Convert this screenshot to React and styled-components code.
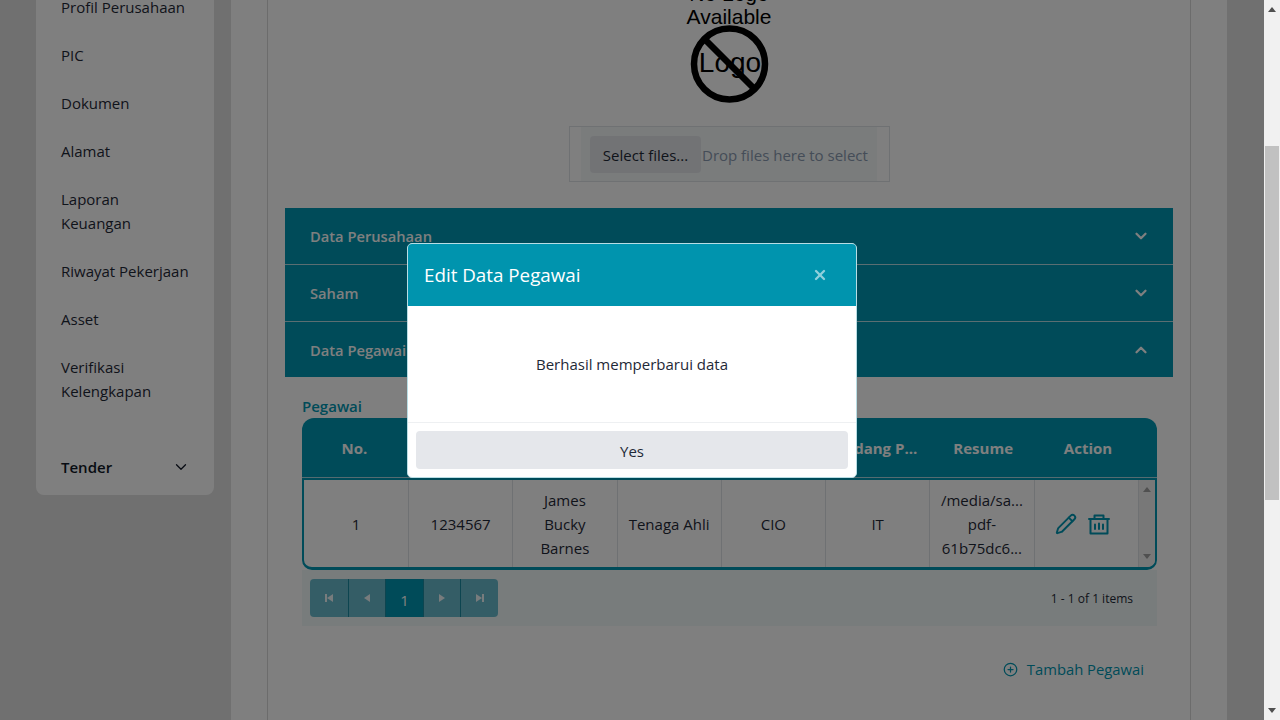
import React from 'react';
import styled, { createGlobalStyle } from 'styled-components';
import { ChevronDown, ChevronUp, X, Pencil, CirclePlus } from 'lucide-react';

const GlobalStyle = createGlobalStyle`
    html, body {
        margin: 0;
        height: 100%;
        overflow: hidden;
        background: #e0e0e0;
        font-family: "Open Sans", "Noto Sans", sans-serif;
        font-size: 15px;
        line-height: 24px;
        color: #212529;
    }
`

const Screen = styled.div`
    display: flex;
    width: 1280px;
    height: 720px;
    overflow: hidden;
    position: relative;
`
const PageArea = styled.div`
    width: 1264px;
    height: 720px;
    display: flex;
    align-items: flex-start;
    padding: 0 37px 0 36px;
    box-sizing: border-box;
    overflow: hidden;
`
const Sidebar = styled.nav`
    width: 178px;
    margin-top: -17px;
    background: #fff;
    border-radius: 0 0 8px 8px;
    padding-bottom: 16px;
    flex-shrink: 0;
`
const NavItem = styled.div`
    padding: 12px 25px;
    color: #1f2937;
`
const NavGroup = styled.div`
    margin-top: 40px;
    padding: 0 24px 0 25px;
    display: flex;
    justify-content: space-between;
    align-items: center;
    height: 24px;
    font-weight: 600;
    color: #111827;
`
const MainPanel = styled.main`
    width: 996px;
    height: 720px;
    margin-left: 17px;
    background: #fff;
    padding: 0 36px;
    box-sizing: border-box;
    flex-shrink: 0;
`
const Inner = styled.div`
    height: 720px;
    border-left: 1px solid #d8d8d8;
    border-right: 1px solid #d8d8d8;
    padding: 0 17px;
`
const LogoBlock = styled.div`
    height: 126px;
    display: flex;
    justify-content: center;
`
const NoLogo = styled.svg`
    width: 120px;
    height: 126px;
    overflow: visible;
    flex-shrink: 0;
`
const UploadBox = styled.div`
    width: 321px;
    height: 56px;
    margin-left: 284px;
    border: 1px solid #dee2e6;
    padding: 0 12px 0 11px;
    box-sizing: border-box;
    display: flex;
    background: #fff;
`
const UploadInner = styled.div`
    flex: 1;
    background: #f4f8f8;
    padding: 9px 8px 0 9px;
    display: flex;
    align-items: flex-start;
`
const SelectButton = styled.div`
    width: 111px;
    height: 37px;
    line-height: 38px;
    text-align: center;
    background: #e5e7eb;
    border-radius: 4px;
    color: #1f2937;
    flex-shrink: 0;
`
const DropText = styled.div`
    line-height: 38px;
    margin-left: 1px;
    color: #8a9ab0;
    white-space: nowrap;
`
const Accordion = styled.div`
    margin-top: 26px;
    background: #b4dce4;
    display: flex;
    flex-direction: column;
    gap: 1px;
`
const AccordionRow = styled.div`
    height: ${props => props.$height}px;
    background: #0097b2;
    padding: 0 23px 0 25px;
    display: flex;
    justify-content: space-between;
    align-items: center;
    color: #fff;
    font-size: 14.7px;
    font-weight: 600;
`
const TableArea = styled.div`
    padding: 17px 16px 0 17px;
`
const TableTitle = styled.div`
    color: #0097b2;
    font-weight: 600;
    line-height: 24px;
`
const TableHead = styled.div`
    display: grid;
    grid-template-columns: repeat(8, 104.8px) 1fr;
    height: 59px;
    background: #0097b2;
    border-bottom: 1px solid #a8d8e2;
    border-radius: 12px 12px 0 0;
    align-items: center;
    color: #fff;
    font-weight: 700;
    text-align: center;
`
const HeadCell = styled.div`
    padding: 0 8px;
    white-space: nowrap;
`
const TableBody = styled.div`
    display: grid;
    grid-template-columns: 105px repeat(7, 104.25px) 1fr;
    height: 92px;
    box-sizing: border-box;
    border: 2px solid #0097b2;
    border-bottom-width: 3px;
    border-radius: 0 0 10px 10px;
    overflow: hidden;
`
const Cell = styled.div`
    display: flex;
    align-items: center;
    justify-content: center;
    text-align: center;
    padding: 0 4px;
    border-right: 1px solid #dee2e6;
    color: #1f2937;
`
const ActionCell = styled(Cell)`
    gap: 11px;
    padding: 1px 8px 0 0;
`
const IconButton = styled.span`
    display: inline-flex;
    color: #0097b2;
`
const InnerScroll = styled.div`
    background: #f1f1f1;
    display: flex;
    flex-direction: column;
    justify-content: space-between;
    align-items: center;
    padding: 5px 0 6px;
`
const Pager = styled.div`
    height: 56px;
    background: #f0f8f8;
    display: flex;
    justify-content: space-between;
    align-items: center;
    padding: 0 24px 0 8px;
`
const PagerButtons = styled.div`
    display: flex;
    height: 38px;
    border-radius: 4px;
    overflow: hidden;
`
const PageBtn = styled.div`
    width: 37.6px;
    display: flex;
    align-items: center;
    justify-content: center;
    background: ${props => props.$active ? '#0097b2' : '#68bacc'};
    border-left: ${props => props.$first ? 0 : '1px solid #1a8aa0'};
    box-sizing: border-box;
    color: #fff;
    padding-top: ${props => props.$active ? '3px' : 0};
`
const PageInfo = styled.div`
    font-size: 12px;
    padding-top: 2px;
    color: #1f2937;
`
const AddLink = styled.div`
    display: flex;
    justify-content: flex-end;
    align-items: center;
    gap: 9px;
    margin-top: 31px;
    padding-right: 13px;
    font-size: 14.8px;
    color: #0097b2;
`
const Glyph = styled.svg`
    width: 10px;
    height: 10px;
    fill: ${props => props.$color || '#fff'};
`
const TrashIcon = styled.svg`
    width: 22px;
    height: 22px;
    fill: none;
    stroke: currentColor;
    stroke-width: 2;
    stroke-linejoin: round;
    stroke-linecap: round;
`
const Overlay = styled.div`
    position: absolute;
    top: 0;
    left: 0;
    width: 1264px;
    height: 720px;
    background: rgba(0, 0, 0, 0.5);
    display: flex;
    align-items: center;
    justify-content: center;
`
const Modal = styled.div`
    width: 450px;
    height: 235px;
    box-sizing: border-box;
    background: #fff;
    border: 1px solid #b8dde4;
    border-radius: 5px;
    overflow: hidden;
    display: flex;
    flex-direction: column;
`
const ModalHeader = styled.div`
    height: 62px;
    background: #0094ae;
    display: flex;
    justify-content: space-between;
    align-items: center;
    padding: 0 28px 0 16px;
    color: #fff;
    font-size: 18.8px;
`
const CloseIcon = styled.span`
    display: inline-flex;
    color: #8fd0dc;
`
const ModalBody = styled.div`
    height: 116px;
    display: flex;
    align-items: center;
    justify-content: center;
    color: #1f2937;
`
const ModalFooter = styled.div`
    flex: 1;
    border-top: 1px solid #eef0f2;
    padding: 8px;
`
const YesButton = styled.div`
    height: 38px;
    line-height: 40px;
    text-align: center;
    background: #e5e7eb;
    border-radius: 4px;
    color: #1f2937;
`
const ScrollBar = styled.div`
    width: 16px;
    height: 720px;
    background: #f1f1f1;
    display: flex;
    flex-direction: column;
    align-items: center;
    justify-content: space-between;
    padding: 5px 0;
    box-sizing: border-box;
    position: relative;
    flex-shrink: 0;
`
const ScrollThumb = styled.div`
    position: absolute;
    top: 146px;
    left: 1px;
    width: 14px;
    height: 354px;
    background: #c1c1c1;
`

const navItems = ['Profil Perusahaan', 'PIC', 'Dokumen', 'Alamat', 'Laporan Keuangan', 'Riwayat Pekerjaan', 'Asset', 'Verifikasi Kelengkapan'];
const headers = ['No.', 'NIK', 'Nama', 'Status', 'Jabatan', 'Bidang P...', 'Resume', 'Action'];

const Shape = ({ d, color }) => (
    <Glyph viewBox="0 0 10 10" $color={color}><path d={d} /></Glyph>
);

export default function App() {
    return (
        <Screen>
            <GlobalStyle />
            <PageArea>
                <Sidebar>
                    {navItems.map(item => <NavItem key={item}>{item}</NavItem>)}
                    <NavGroup>Tender <ChevronDown size={18} strokeWidth={1.7} /></NavGroup>
                </Sidebar>
                <MainPanel>
                    <Inner>
                        <LogoBlock>
                            <NoLogo viewBox="0 0 120 126">
                                <g fontFamily="Liberation Sans, sans-serif" fontSize="21" textAnchor="middle" fill="#000">
                                    <text x="60" y="1">No Logo</text>
                                    <text x="60" y="24">Available</text>
                                    <text x="61" y="72" fontSize="28">Logo</text>
                                </g>
                                <circle cx="60.5" cy="64" r="35.5" fill="none" stroke="#000" strokeWidth="6.5" />
                                <line x1="35" y1="38.5" x2="86" y2="89.5" stroke="#000" strokeWidth="6.5" />
                            </NoLogo>
                        </LogoBlock>
                        <UploadBox>
                            <UploadInner>
                                <SelectButton>Select files...</SelectButton>
                                <DropText>Drop files here to select</DropText>
                            </UploadInner>
                        </UploadBox>
                        <Accordion>
                            <AccordionRow $height={56}>Data Perusahaan <ChevronDown size={18} strokeWidth={3} /></AccordionRow>
                            <AccordionRow $height={56}>Saham <ChevronDown size={18} strokeWidth={3} /></AccordionRow>
                            <AccordionRow $height={55}>Data Pegawai <ChevronUp size={18} strokeWidth={3} /></AccordionRow>
                        </Accordion>
                        <TableArea>
                            <TableTitle>Pegawai</TableTitle>
                            <TableHead>
                                {headers.map(h => <HeadCell key={h}>{h}</HeadCell>)}
                            </TableHead>
                            <TableBody>
                                <Cell>1</Cell>
                                <Cell>1234567</Cell>
                                <Cell>James<br />Bucky<br />Barnes</Cell>
                                <Cell>Tenaga Ahli</Cell>
                                <Cell>CIO</Cell>
                                <Cell>IT</Cell>
                                <Cell>/media/sa...<br />pdf-<br />61b75dc6...</Cell>
                                <ActionCell>
                                    <IconButton><Pencil size={22} strokeWidth={2.1} /></IconButton>
                                    <IconButton>
                                        <TrashIcon viewBox="0 0 22 22">
                                            <path d="M1 6H21M6.5 6V2.5H15.5V6M2.5 6V20.5H19.5V6" />
                                            <path d="M7 11.5V16M11 10.5V16M15 11.5V16" />
                                        </TrashIcon>
                                    </IconButton>
                                </ActionCell>
                                <InnerScroll>
                                    <Shape d="M5 2L9 7H1Z" color="#a0a0a0" />
                                    <Shape d="M1 3H9L5 8Z" color="#a0a0a0" />
                                </InnerScroll>
                            </TableBody>
                            <Pager>
                                <PagerButtons>
                                    <PageBtn $first><Shape d="M1 1H3V9H1ZM9 1V9L3 5Z" color="#f0f8fa" /></PageBtn>
                                    <PageBtn><Shape d="M8 1V9L2 5Z" color="#f0f8fa" /></PageBtn>
                                    <PageBtn $active>1</PageBtn>
                                    <PageBtn><Shape d="M2 1V9L8 5Z" color="#f0f8fa" /></PageBtn>
                                    <PageBtn><Shape d="M1 1L7 5L1 9ZM7 1H9V9H7Z" color="#f0f8fa" /></PageBtn>
                                </PagerButtons>
                                <PageInfo>1 - 1 of 1 items</PageInfo>
                            </Pager>
                            <AddLink><CirclePlus size={15} /> Tambah Pegawai</AddLink>
                        </TableArea>
                    </Inner>
                </MainPanel>
            </PageArea>
            <ScrollBar>
                <Shape d="M5 2L9 7H1Z" color="#505050" />
                <ScrollThumb />
                <Shape d="M1 3H9L5 8Z" color="#505050" />
            </ScrollBar>
            <Overlay>
                <Modal>
                    <ModalHeader>
                        Edit Data Pegawai
                        <CloseIcon><X size={16} strokeWidth={3.5} /></CloseIcon>
                    </ModalHeader>
                    <ModalBody>Berhasil memperbarui data</ModalBody>
                    <ModalFooter><YesButton>Yes</YesButton></ModalFooter>
                </Modal>
            </Overlay>
        </Screen>
    );
}
